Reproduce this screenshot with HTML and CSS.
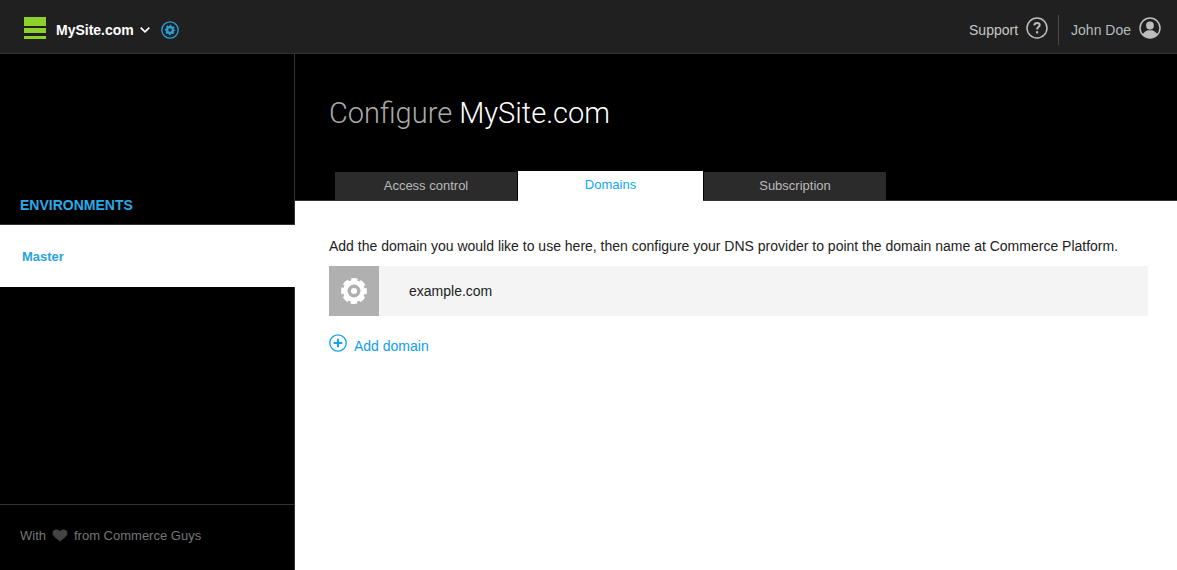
FILE: index.html
```html
<!DOCTYPE html>
<html lang="en">
<head>
<meta charset="utf-8">
<meta name="viewport" content="width=device-width, initial-scale=1">
<title>Configure MySite.com</title>
<link rel="stylesheet" href="styles.css">
</head>
<body>
<header class="topbar">
  <div class="site">
    <a class="logo" href="#" aria-label="Home">
      <svg width="22" height="22" viewBox="0 0 22 22" fill="#8fd12b"><path d="M0 0h22v9H0zM0 11h22v5H0zM0 19h22v3H0z"/></svg>
    </a>
    <button class="site-menu" type="button">MySite.com
      <svg width="10" height="6" viewBox="0 0 10 6" fill="none" stroke="#fff" stroke-width="1.7"><path d="M.7.7 5 4.800 9.300.7"/></svg>
    </button>
    <a class="site-settings" href="#" aria-label="Site settings">
      <svg width="18" height="18" viewBox="0 0 18 18" fill="none" stroke="#29a3dc"><circle cx="9" cy="9" r="8.200" stroke-width="1.300"/><circle cx="9" cy="9" r="2.900" stroke-width="2.200"/><circle cx="9" cy="9" r="4.400" stroke-width="1.600" stroke-dasharray="1.900 1.556" stroke-dashoffset=".95"/></svg>
    </a>
  </div>
  <nav class="account">
    <a class="account-link support" href="#">Support
      <svg width="22" height="22" viewBox="0 0 22 22" fill="none" stroke="#bdbdbd"><circle cx="11" cy="11" r="10" stroke-width="1.500"/><path d="M8.300 8.400C8.400 6.600 9.500 5.900 11 5.900c1.600 0 2.700.9 2.700 2.200 0 2-2.600 2-2.600 4.300" stroke-width="2"/><path d="M10 14.200h2.200v2.200H10z" fill="#bdbdbd" stroke="none"/></svg>
    </a>
    <a class="account-link user" href="#">John Doe
      <svg width="22" height="22" viewBox="0 0 22 22" fill="#bdbdbd"><circle cx="11" cy="11" r="10" fill="none" stroke="#bdbdbd" stroke-width="1.500"/><circle cx="11" cy="8.500" r="3.900"/><path d="M3.600 17.200C5 14.700 7.600 14 8.800 13.200h4.400c1.200.8 3.800 1.500 5.200 4C16.700 19.500 14 21 11 21s-5.700-1.500-7.400-3.800z"/></svg>
    </a>
  </nav>
</header>
<div class="layout">
  <aside class="sidebar">
    <h2 class="sidebar-title">ENVIRONMENTS</h2>
    <a class="environment" href="#">Master</a>
    <footer class="credit">With
      <svg width="16" height="13" viewBox="0 0 16 13" fill="#444"><path d="M8 12.500C5.500 10 .5 7.500.5 4 .5.300 5.500-.7 8 2.300c2.500-3 7.500-2 7.500 1.700 0 3.500-5 6-7.500 8.500z"/></svg>
      from Commerce Guys</footer>
  </aside>
  <main class="main">
    <div class="banner">
      <h1 class="title"><span class="title-action">Configure</span> MySite.com</h1>
      <nav class="tabs">
        <a class="tab" href="#">Access control</a>
        <a class="tab tab-active" href="#" aria-current="page">Domains</a>
        <a class="tab" href="#">Subscription</a>
      </nav>
    </div>
    <section class="content">
      <p class="intro">Add the domain you would like to use here, then configure your DNS provider to point the domain name at Commerce Platform.</p>
      <div class="domain">
        <button class="domain-settings" type="button" aria-label="Configure example.com">
          <svg width="26" height="26" viewBox="0 0 26 26" fill="none" stroke="#fff"><circle cx="13" cy="13" r="8.700" stroke-width="4.400"/><circle cx="13" cy="13" r="11.400" stroke-width="3" stroke-dasharray="6.200 2.754" stroke-dashoffset="3.100"/><circle cx="13" cy="13" r="3" fill="#fff" stroke="none"/></svg>
        </button>
        <span class="domain-name">example.com</span>
      </div>
      <a class="add-domain" href="#">
        <svg width="18" height="18" viewBox="0 0 18 18" fill="none" stroke="#0fa5f0"><circle cx="9" cy="9" r="8.200" stroke-width="1.300"/><path d="M9 4.700v8.600M4.700 9h8.600" stroke-width="2"/></svg>
        <span class="add-label">Add domain</span>
      </a>
    </section>
  </main>
</div>
</body>
</html>
```
FILE: styles.css
```css
* {
  box-sizing: border-box;
}

body {
  margin: 0;
  min-height: 100vh;
  display: flex;
  flex-direction: column;
  font: 14px/20px "Liberation Sans", Arial, sans-serif;
  color: #222;
  background: #fff;
}

a {
  color: inherit;
  text-decoration: none;
}

button {
  font: inherit;
  border: 0;
  padding: 0;
  cursor: pointer;
}

svg {
  display: block;
  flex: none;
}

.topbar {
  display: flex;
  justify-content: space-between;
  height: 54px;
  padding: 0 16px 0 24px;
  background: #202020;
  border-bottom: 1px solid #333;
}

.site {
  display: flex;
  align-items: center;
  padding-top: 6px;
}

.logo {
  padding-bottom: 4px;
  margin-right: 10px;
}

.site-menu {
  display: flex;
  align-items: center;
  gap: 6px;
  color: #fff;
  font-weight: bold;
  background: none;
}

.site-settings {
  margin-left: 11px;
}

.account {
  display: flex;
  align-items: center;
  padding-top: 6px;
  color: #b5bdbd;
}

.account-link {
  display: flex;
  align-items: center;
  gap: 8px;
  height: 30px;
}

.account-link svg {
  margin-bottom: 4px;
}

.support {
  color: #c8c8c8;
  padding-right: 10px;
  border-right: 1px solid #4a4a4a;
}

.user {
  padding-left: 12px;
}

.layout {
  flex: 1;
  display: flex;
}

.sidebar {
  flex: none;
  display: flex;
  flex-direction: column;
  width: 295px;
  background: #000;
  border-right: 1px solid #333;
}

.sidebar-title {
  margin: 0;
  padding: 141px 20px 9px;
  font-size: 14px;
  line-height: 20px;
  color: #29abe8;
  border-bottom: 1px solid #333;
}

.environment {
  margin-right: -1px;
  padding: 22px 22px 20px;
  font-size: 13px;
  font-weight: bold;
  color: #29a3dc;
  background: #fff;
}

.credit {
  display: flex;
  align-items: center;
  gap: 6px;
  margin-top: auto;
  padding: 21px 20px 24px;
  font-size: 13px;
  color: #777;
  border-top: 1px solid #333;
}

.credit svg {
  margin-bottom: 2px;
}

.main {
  flex: 1;
  min-width: 0;
}

.banner {
  background: #000;
  border-bottom: 1px solid #333;
}

.title {
  margin: 0;
  padding: 39px 34px 38px;
  font: 300 29px/40px Roboto, "Liberation Sans", sans-serif;
  color: #fff;
}

.title-action {
  color: #aaa;
}

.tabs {
  display: flex;
  align-items: flex-end;
  gap: 1px;
  padding: 0 40px;
}

.tab {
  flex: 0 1 182px;
  height: 28px;
  padding-top: 4px;
  font-size: 13px;
  text-align: center;
  color: #bbb;
  background: #2b2b2b;
}

.tab-active {
  flex-basis: 185px;
  height: 30px;
  margin-bottom: -1px;
  color: #0fa5f0;
  background: #fff;
}

.content {
  padding: 35px 29px 35px 34px;
}

.intro {
  margin: 0 0 10px;
}

.domain {
  display: flex;
  align-items: center;
  gap: 30px;
  margin-bottom: 18px;
  background: #f4f4f4;
}

.domain-settings {
  display: grid;
  place-items: center;
  width: 50px;
  height: 50px;
  background: #b0b0b0;
}

.add-domain {
  display: inline-flex;
  gap: 7px;
  color: #0f9df0;
}

.add-label {
  padding-top: 2px;
}
```
